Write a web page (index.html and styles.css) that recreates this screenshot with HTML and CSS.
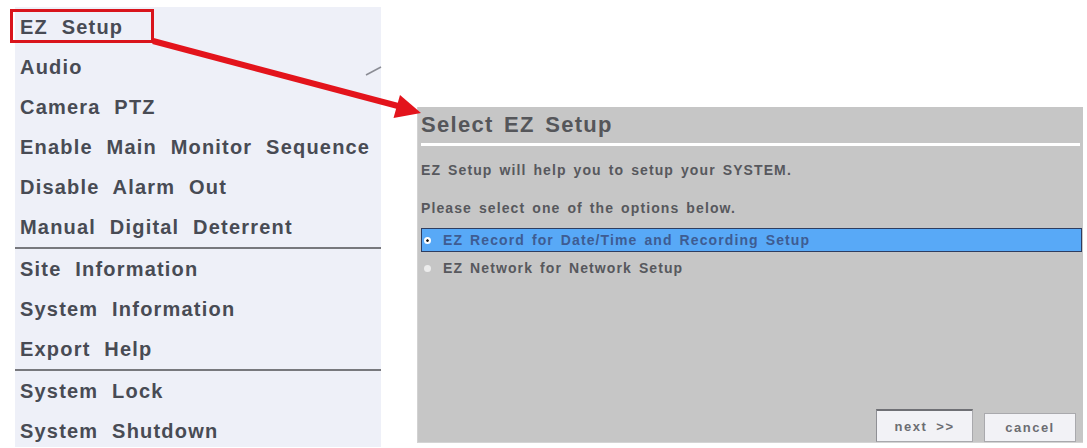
FILE: index.html
```html
<!DOCTYPE html>
<html lang="en">

<head>
    <meta charset="UTF-8">
    <meta name="viewport" content="width=device-width, initial-scale=1.0">
    <title>EZ Setup</title>
    <link rel="stylesheet" href="styles.css">
</head>

<body>
    <div class="page">
        <div class="menu">
            <div class="group">
                <div class="item">EZ Setup</div>
                <div class="item">Audio</div>
                <div class="item">Camera PTZ</div>
                <div class="item">Enable Main Monitor Sequence</div>
                <div class="item">Disable Alarm Out</div>
                <div class="item">Manual Digital Deterrent</div>
            </div>
            <div class="group">
                <div class="item">Site Information</div>
                <div class="item">System Information</div>
                <div class="item">Export Help</div>
            </div>
            <div class="group">
                <div class="item">System Lock</div>
                <div class="item">System Shutdown</div>
            </div>
        </div>

        <div class="dialog">
            <div class="dlg-title">Select EZ Setup</div>
            <div class="dlg-body">
                <p>EZ Setup will help you to setup your SYSTEM.</p>
                <p>Please select one of the options below.</p>
                <div class="options">
                    <div class="option selected"><span class="radio on"></span>EZ Record for Date/Time and Recording Setup</div>
                    <div class="option"><span class="radio"></span>EZ Network for Network Setup</div>
                </div>
            </div>
            <div class="dlg-buttons">
                <button class="btn focus">next &gt;&gt;</button>
                <button class="btn">cancel</button>
            </div>
        </div>

        <!-- red callout drawn over the screenshot -->
        <svg class="callout" width="1087" height="448" viewBox="0 0 1087 448">
            <rect x="11.5" y="10.5" width="141" height="31" fill="none" stroke="#d9141c" stroke-width="3"/>
            <line x1="153" y1="41" x2="398" y2="106" stroke="#e3141c" stroke-width="6"/>
            <polygon points="421,113 393.5,118 400,95" fill="#e3141c"/>
            <line x1="366" y1="75" x2="381" y2="67" stroke="#8a8c94" stroke-width="1.5"/>
        </svg>
    </div>
</body>

</html>
```

FILE: styles.css
```css
body {
    margin: 0px;
    padding: 0px;
    background-color: #ffffff;
    font-family: "Liberation Sans", Arial, sans-serif;
    font-weight: bold;
}

.page {
    position: relative;
    display: flex;
    align-items: flex-start;
    width: 1087px;
    height: 448px;
    overflow: hidden;
}

.menu {
    margin-top: 7px;
    margin-left: 15px;
    width: 366px;
    height: 440px;
    background-color: #eef0f8;
}

.group + .group {
    border-top: 2px solid #77787d;
}

.item {
    height: 40px;
    line-height: 40px;
    padding-left: 5px;
    font-size: 20px;
    letter-spacing: 1.2px;
    word-spacing: 7px;
    color: #484b54;
    white-space: nowrap;
}

.dialog {
    display: flex;
    flex-direction: column;
    margin-top: 107px;
    margin-left: 36px;
    width: 665px;
    height: 335px;
    background-color: #c6c6c6;
    border-left: 1px solid #d2d2d2;
    border-bottom: 1px solid #d4d4d4;
}

.dlg-title {
    height: 36px;
    line-height: 36px;
    margin: 0 3px;
    font-size: 22px;
    letter-spacing: 1.3px;
    word-spacing: 3px;
    color: #55565a;
    border-bottom: 3px solid #ffffff;
}

.dlg-body {
    padding: 14px 1px 0 3px;
    font-size: 14px;
    letter-spacing: 1.1px;
    word-spacing: 2px;
    color: #57585d;
}

.dlg-body p {
    margin: 0 0 18px 0;
    height: 20px;
    line-height: 20px;
}

.options {
    margin-top: -8px;
}

.option {
    display: flex;
    align-items: center;
    height: 22px;
    margin-bottom: 4px;
    padding-left: 2px;
    border: 1px solid transparent;
}

.option.selected {
    background-color: #58a9f7;
    border-color: #2e3d60;
    color: #3e5c92;
}

.radio {
    width: 7px;
    height: 7px;
    margin-right: 12px;
    border-radius: 50%;
    background-color: #ececec;
    box-sizing: border-box;
}

.radio.on {
    background-color: #ffffff;
    border: 2px solid #ffffff;
    box-shadow: inset 0 0 0 2px #111111;
}

.dlg-buttons {
    display: flex;
    justify-content: flex-end;
    align-items: flex-end;
    gap: 11px;
    margin-top: auto;
    padding: 0 7px 0 0;
}

.btn {
    height: 29px;
    width: 92px;
    padding: 0;
    font-family: "Liberation Sans", Arial, sans-serif;
    font-weight: bold;
    font-size: 13px;
    letter-spacing: 1.5px;
    word-spacing: 4px;
    color: #6c6d72;
    background-color: #f2f2f6;
    border: 1px solid #a9a9ad;
    border-radius: 0;
}

.btn.focus {
    width: 97px;
    height: 33px;
    border-top: 2px solid #6f7075;
    border-left: 1px solid #8f9095;
}

.callout {
    position: absolute;
    left: 0;
    top: 0;
    pointer-events: none;
}
```
